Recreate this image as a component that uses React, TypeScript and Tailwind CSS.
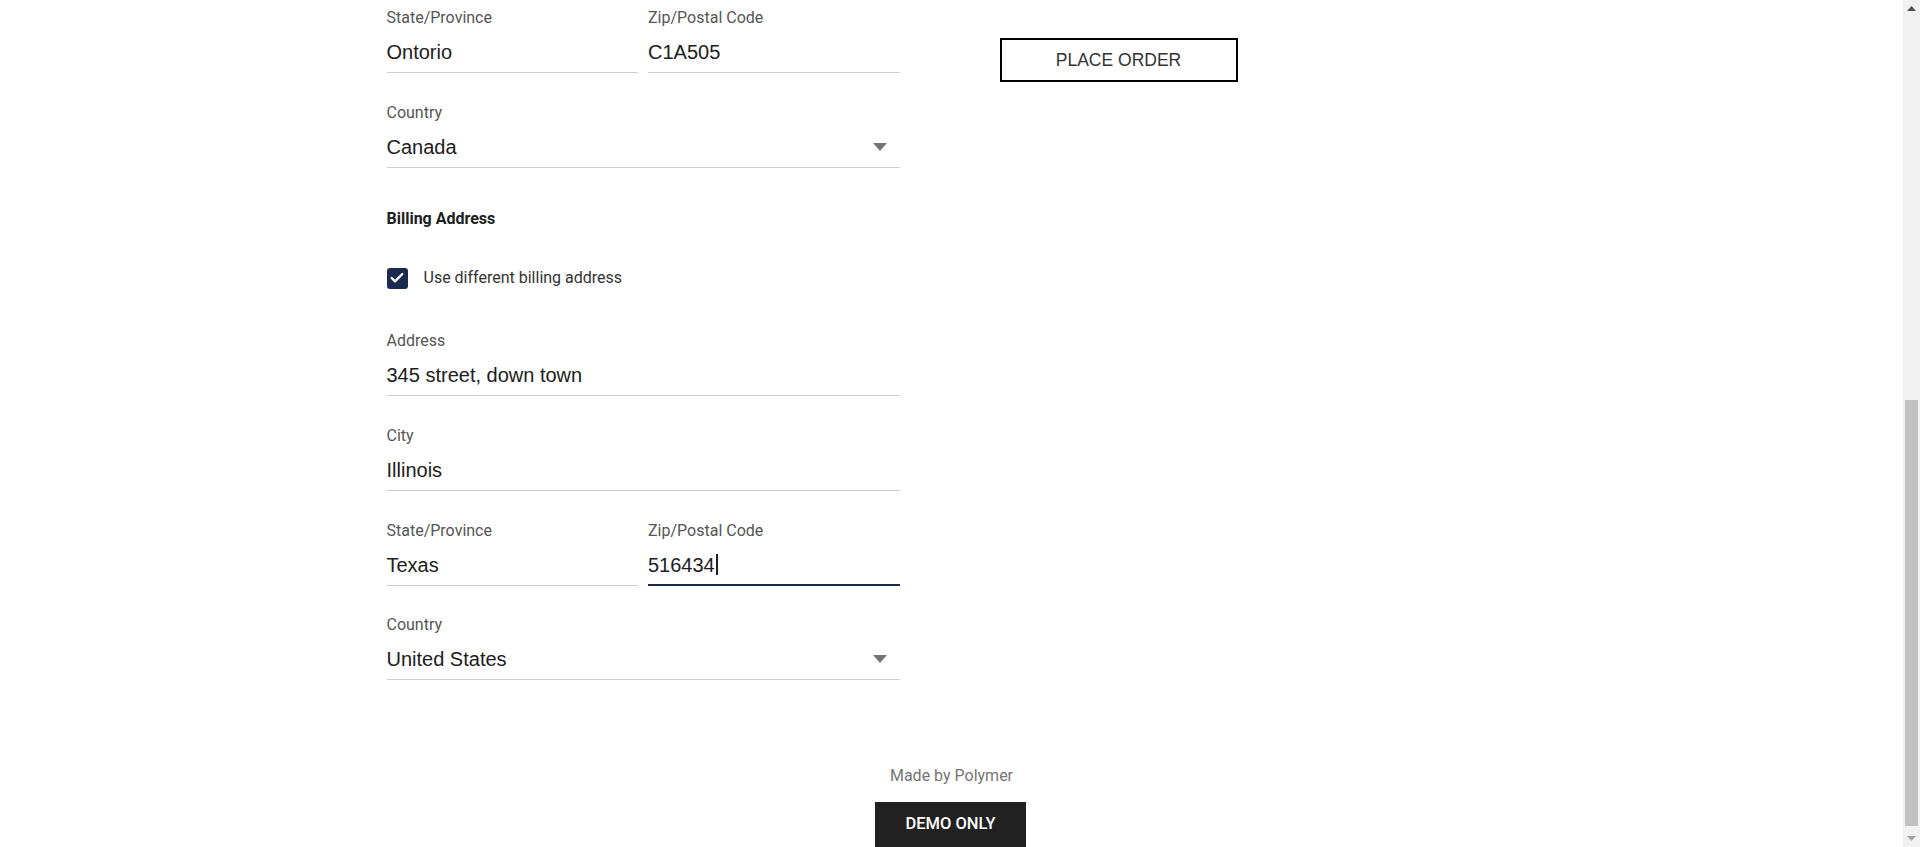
import { Check } from 'lucide-react';

interface FieldProps {
  label: string;
  value: string;
  focused?: boolean;
  select?: boolean;
  className?: string;
}

function Field({ label, value, focused, select, className = '' }: FieldProps) {
  return (
    <div className={`flex flex-col ${className}`}>
      <label className="h-5 pt-px leading-5 text-[16px] text-[#555] font-['Roboto',sans-serif]">
        {label}
      </label>
      <div
        className={`h-[46px] pt-[5px] flex items-center justify-between ${
          focused ? 'border-b-2 border-[#1b2b50]' : 'border-b border-[#cfcfcf]'
        }`}
      >
        <span className="flex items-center text-[20px] text-[#202020] font-['Liberation_Sans',Arial,sans-serif]">
          {value}
          {focused && <span className="ml-px w-[2px] h-[21px] bg-[#202020]" />}
        </span>
        {select && (
          <svg width="14" height="8" viewBox="0 0 14 8" className="mr-[13px]">
            <polygon points="0,0 14,0 7,8" fill="#757575" />
          </svg>
        )}
      </div>
    </div>
  );
}

function Scrollbar() {
  return (
    <div className="w-[17px] h-full bg-[#f1f1f1] flex flex-col items-center">
      <div className="h-[17px] flex items-center justify-center">
        <svg width="9" height="5" viewBox="0 0 9 5">
          <polygon points="0,5 9,5 4.5,0" fill="#505050" />
        </svg>
      </div>
      <div className="flex-1 w-full flex flex-col justify-end px-[2px] pb-[4px]">
        <div className="h-[426px] bg-[#c1c1c1]" />
      </div>
      <div className="h-[17px] flex items-center justify-center">
        <svg width="9" height="5" viewBox="0 0 9 5">
          <polygon points="0,0 9,0 4.5,5" fill="#a3a3a3" />
        </svg>
      </div>
    </div>
  );
}

export default function App() {
  return (
    <div className="h-[847px] w-full overflow-hidden flex bg-white">
      <div className="flex-1 flex flex-col">
        {/* CHECKOUT */}
        <div className="w-[1130px] mx-auto flex">
          <div className="w-[513px] flex flex-col pt-[7px]">
            <div className="flex gap-[10px]">
              <Field className="flex-1" label="State/Province" value="Ontorio" />
              <Field className="flex-1" label="Zip/Postal Code" value="C1A505" />
            </div>
            <Field className="mt-[29px]" label="Country" value="Canada" select />

            <h3 className="mt-[41px] h-5 leading-5 text-[16px] font-bold text-[#202020] font-['Roboto',sans-serif]">
              Billing Address
            </h3>

            <div className="mt-[37px] h-6 flex items-center">
              <div className="w-[21px] h-[21px] rounded-[3px] bg-[#1b2b50] flex items-center justify-center">
                <Check className="w-4 h-4 text-white" strokeWidth={3.5} />
              </div>
              <span className="ml-[16px] text-[16px] text-[#333] font-['Roboto',sans-serif]">
                Use different billing address
              </span>
            </div>

            <Field className="mt-[40px]" label="Address" value="345 street, down town" />
            <Field className="mt-[29px]" label="City" value="Illinois" />
            <div className="mt-[29px] flex gap-[10px]">
              <Field className="flex-1" label="State/Province" value="Texas" />
              <Field className="flex-1" label="Zip/Postal Code" value="516434" focused />
            </div>
            <Field className="mt-[28px]" label="Country" value="United States" select />
          </div>

          <div className="ml-[100px] pt-[38px]">
            <button className="w-[238px] h-[44px] border-2 border-black text-[17.5px] text-[#333] font-['Liberation_Sans',Arial,sans-serif]">
              PLACE ORDER
            </button>
          </div>
        </div>

        {/* FOOTER */}
        <div className="mt-[86px] flex flex-col items-center">
          <p className="h-5 leading-5 text-[16px] text-[#757575] font-['Roboto',sans-serif]">
            Made by Polymer
          </p>
          <div className="mt-4 mr-[2px] w-[151px] h-[45px] bg-[#212121] flex items-center justify-center text-white text-[16.5px] font-medium font-['Roboto',sans-serif]">
            DEMO ONLY
          </div>
        </div>
      </div>
      <Scrollbar />
    </div>
  );
}
